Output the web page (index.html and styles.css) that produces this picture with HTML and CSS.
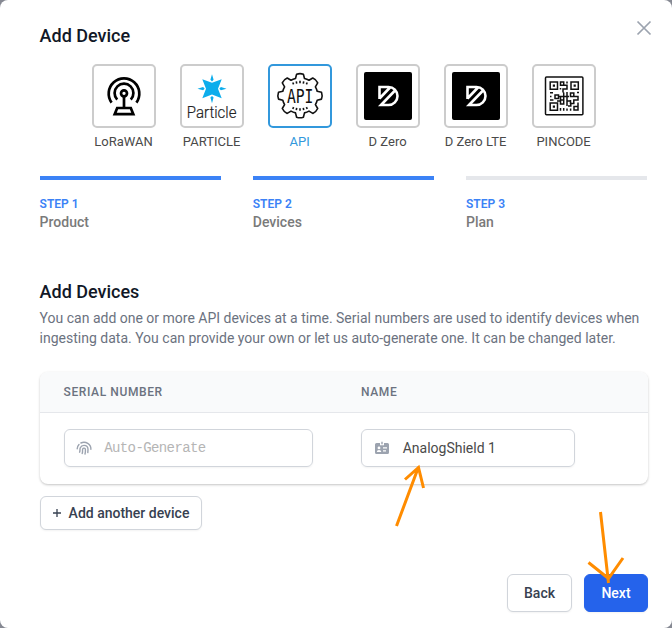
FILE: index.html
```html
<!DOCTYPE html>
<html lang="en">
<head>
<meta charset="utf-8">
<title>Add Device</title>
<link rel="stylesheet" href="styles.css">
</head>
<body>
<main class="modal">
  <svg class="close" viewBox="0 0 16 16"><path d="M1.5 1.5 14.5 14.5M14.5 1.5 1.5 14.5"/></svg>
  <h1>Add Device</h1>

  <div class="types">
    <div class="type">
      <div class="tile">
        <svg viewBox="2 2 60 60" class="line-icon lora">
          <g stroke-width="2.7">
            <circle cx="32" cy="29.3" r="3"/>
            <path d="M25.2 35.6A9.4 9.4 0 1 1 38.8 35.6"/>
            <path d="M19.6 38.6A15.3 15.3 0 1 1 44.4 38.6"/>
            <path d="M32 32.5V43M25.2 44H38.8L41.3 50.2H22.7Z"/>
          </g>
        </svg>
      </div>
      <span>LoRaWAN</span>
    </div>
    <div class="type">
      <div class="tile">
        <svg viewBox="2 2 60 60">
          <g fill="#0cadec">
            <path d="M22.3 15.2 32 18.8 41.7 15.2 38 24.7 41.7 34.2 32 30.6 22.3 34.2 26 24.7Z"/>
            <path d="M32 10.2 33.6 15.8 32 17.4 30.4 15.8ZM32 39.2 33.6 33.6 32 32 30.4 33.6ZM17.5 24.7 23.1 23.1 24.7 24.7 23.1 26.3ZM46.5 24.7 40.9 23.1 39.3 24.7 40.9 26.3Z"/>
          </g>
          <text class="particle" x="6.8" y="53.5" textLength="49.6" lengthAdjust="spacingAndGlyphs">Particle</text>
        </svg>
      </div>
      <span>PARTICLE</span>
    </div>
    <div class="type selected">
      <div class="tile">
        <svg viewBox="2 2 60 60" class="line-icon">
          <g stroke-width="1.6" stroke-linejoin="round">
            <path d="M27.5 14.5 28.6 10.2Q32 9 35.4 10.2L36.5 14.5Q39 15.1 41 16.3L44.8 14Q48.2 15.5 49.7 18.9L47.4 22.8Q48.6 24.8 49.2 27.2L53.5 28.3Q54.7 31.7 53.5 35.1L49.2 36.2Q48.6 38.6 47.4 40.6L49.7 44.5Q48.2 47.9 44.8 49.4L41 47.1Q39 48.3 36.5 48.9L35.4 53.2Q32 54.4 28.6 53.2L27.5 48.9Q25 48.3 23 47.1L19.2 49.4Q15.8 47.9 14.3 44.5L16.6 40.6Q15.4 38.6 14.8 36.2L10.5 35.1Q9.3 31.7 10.5 28.3L14.8 27.2Q15.4 24.8 16.6 22.8L14.3 18.9Q15.8 15.5 19.2 14L23 16.3Q25 15.1 27.5 14.5Z"/>
            <path d="M24.8 18.5 25.6 20.4M28.3 17.3 28.7 19.7M32 16.8V19.3M35.7 17.3 35.3 19.7M39.2 18.5 38.4 20.4M24.8 45 25.6 43.1M28.3 46.2 28.7 43.8M32 46.7V44.2M35.7 46.2 35.3 43.8M39.2 45 38.4 43.1"/>
          </g>
          <text class="api" x="18.9" y="39.2" textLength="26.5" lengthAdjust="spacingAndGlyphs">API</text>
        </svg>
      </div>
      <span>API</span>
    </div>
    <div class="type">
      <div class="tile">
        <svg viewBox="2 2 60 60">
          <rect x="8" y="8" width="48" height="48" rx="2"/>
          <path class="dlogo" d="M23.5 35V23H32.5A9 9 0 0 1 32.5 41H25L39.5 26M23.5 34.5 34 23.5"/>
        </svg>
      </div>
      <span>D Zero</span>
    </div>
    <div class="type">
      <div class="tile">
        <svg viewBox="2 2 60 60">
          <rect x="8" y="8" width="48" height="48" rx="2"/>
          <path class="dlogo" d="M23.5 35V23H32.5A9 9 0 0 1 32.5 41H25L39.5 26M23.5 34.5 34 23.5"/>
        </svg>
      </div>
      <span>D Zero LTE</span>
    </div>
    <div class="type">
      <div class="tile">
        <svg viewBox="2 2 60 60" class="line-icon">
          <g stroke-width="1.5">
            <rect x="13.5" y="13.1" width="37.4" height="37.6" rx="1"/>
            <path d="M18.2 18h7.3v7.3H18.2ZM39 18h7.3v7.3H39ZM18.2 39h7.3v7.3H18.2Z"/>
            <path d="M20.8 21.7h2.2M41.6 21.7h2.2M20.8 42.7h2.2" stroke-width="2.2"/>
            <path d="M28.5 18h3.2v3.2H28.5ZM31.7 21.2H35V25H31v3.5M35 17.5v2M28.5 24v1.5M18 28.7h3M18 36h3.5M18 32.4h1.5M23 31h3.5v3.5H23ZM26.5 32.5H37M28.5 32.5V37H25M31.7 28.5V36H28.5v4h3.2v-4M35 28v9h3.5M38.5 29h3.3v3.5H38.5ZM45 28.5h2M41.8 32.5H46V36H41.8V39.5H38.5V36M35 37v5M36 42h2.8V38.5M42 42.5h4V46H42ZM46 38.5v4M28.5 44v2.8M31.7 44v2.8M35 44.5v2.3M38.6 44.5v2.3"/>
          </g>
        </svg>
      </div>
      <span>PINCODE</span>
    </div>
  </div>

  <ol class="steps">
    <li class="done"><b>STEP 1</b><span>Product</span></li>
    <li class="done"><b>STEP 2</b><span>Devices</span></li>
    <li><b>STEP 3</b><span>Plan</span></li>
  </ol>

  <h2>Add Devices</h2>
  <p class="intro">You can add one or more API devices at a time. Serial numbers are used to identify devices when ingesting data. You can provide your own or let us auto-generate one. It can be changed later.</p>

  <section class="card">
    <div class="row head"><span>SERIAL NUMBER</span><span>NAME</span></div>
    <div class="row">
      <div class="field serial">
        <svg viewBox="0 0 16 16" class="finger"><path d="M1.2 8.8A7 6.6 0 0 1 3 4.6M4.9 3A7 6.6 0 0 1 14.9 9.2M3.6 12.2C4.3 10.6 3.6 9.4 4.3 7.8A4 4 0 0 1 8 5.4C10.6 5.4 12 7.2 12 9.5L11.8 12.6M6.2 13.6C7 11.6 6.2 10.4 6.7 9A1.4 1.4 0 0 1 9.4 9.4C9.5 11 9.4 12.6 9 14"/></svg>
        <span>Auto-Generate</span>
      </div>
      <div class="field name">
        <svg viewBox="0 0 16 16"><path fill="#9ca3af" fill-rule="evenodd" d="M2.5 3H6V5.2H10V3H13.5A1.5 1.5 0 0 1 15 4.5V12.5A1.5 1.5 0 0 1 13.5 14H2.5A1.5 1.5 0 0 1 1 12.5V4.5A1.5 1.5 0 0 1 2.5 3ZM5 6.5A1.4 1.4 0 1 0 5 9.3 1.4 1.4 0 1 0 5 6.5ZM2.8 12H7.3Q7.2 10 5 10T2.8 12ZM9 7.3V8.6H13V7.3ZM9 10.2V11.5H12V10.2ZM7.3 1.8H8.7V4.2H7.3Z"/></svg>
        <span>AnalogShield 1</span>
      </div>
    </div>
  </section>

  <button class="add"><svg viewBox="0 0 10 10"><path d="M5 1V9M1 5H9"/></svg>Add another device</button>

  <footer><button>Back</button><button class="primary">Next</button></footer>

  <svg class="arrows" viewBox="0 0 672 628"><path d="M396.5 526 418.5 467M405 479.5 418.5 467.5 423.5 488M600.5 512 608.5 583M588.5 562.5 608.5 578.5 623 558"/></svg>
</main>
</body>
</html>
```

FILE: styles.css
```css
* { box-sizing: border-box; }
body {
  margin: 0;
  background: #868993;
  font: 14px/20px Roboto, "Liberation Sans", sans-serif;
}
.modal {
  position: relative;
  height: 628px;
  padding: 24px 24px 16px 39.6px;
  border-radius: 8px;
  background: #fff;
}
.close {
  position: absolute;
  top: 20px;
  right: 20px;
  width: 16px;
  height: 16px;
  fill: none;
  stroke: #9ca3af;
  stroke-width: 1.7;
}
h1, h2 {
  margin: 0;
  font-size: 18px;
  line-height: 24px;
  font-weight: 500;
  color: #111827;
}
.types {
  display: flex;
  gap: 24px;
  margin: 16px 0 0 52px;
}
.type {
  display: flex;
  flex-direction: column;
  align-items: center;
  width: 64px;
  font-size: 13px;
  color: #4a4a4a;
  white-space: nowrap;
}
.type > span { margin-top: 4px; }
.tile {
  width: 64px;
  height: 64px;
  border: 2px solid #ccc;
  border-radius: 5px;
}
.tile svg { display: block; }
.selected { color: #3298dc; }
.selected .tile { border-color: #3298dc; }
.line-icon { fill: none; stroke: #111; }
.lora { stroke: #000; }
.dlogo { fill: none; stroke: #fff; stroke-width: 2.6; }
.particle { font: 300 17px Roboto, sans-serif; fill: #222; stroke: #222; stroke-width: .2; }
.api { font: 20px "DejaVu Sans Mono", monospace; fill: #111; stroke: none; }
.steps {
  display: grid;
  grid-template-columns: repeat(3, 1fr);
  gap: 32px;
  width: 607.6px;
  margin: 24px 0 0;
  padding: 0;
  list-style: none;
}
.steps li {
  display: flex;
  flex-direction: column;
  padding-top: 16px;
  border-top: 4px solid #e5e7eb;
}
.steps .done { border-color: #3b82f6; }
.steps b {
  font-size: 12px;
  line-height: 16px;
  font-weight: 600;
  color: #3b82f6;
}
.steps span { font-weight: 500; color: #7a7a7a; }
h2 { margin-top: 48px; }
.intro {
  width: 608px;
  margin: 4px 0 0;
  color: #6b7280;
}
.card {
  width: 608px;
  height: 112px;
  margin-top: 24px;
  border-radius: 8px;
  overflow: hidden;
  box-shadow: 0 1px 3px rgba(0,0,0,.14), 0 1px 2px rgba(0,0,0,.1);
}
.row {
  display: grid;
  grid-template-columns: 297.5px 1fr;
  padding: 16px 24px;
}
.head {
  height: 41px;
  padding: 12px 24px;
  border-bottom: 1px solid #e5e7eb;
  background: #f9fafb;
  font-size: 12px;
  line-height: 16px;
  font-weight: 500;
  letter-spacing: .6px;
  color: #6b7280;
}
.field {
  display: flex;
  align-items: center;
  height: 38px;
  padding: 0 12px 0 11.6px;
  border: 1px solid #d1d5db;
  border-radius: 6px;
  box-shadow: 0 1px 2px rgba(0,0,0,.05);
}
.field svg { width: 16px; height: 16px; }
.finger { fill: none; stroke: #9ca3af; stroke-width: 1.4; stroke-linecap: round; }
.serial { width: 249px; gap: 12px; }
.serial span {
  font-family: "Liberation Mono", monospace;
  letter-spacing: -.6px;
  color: #b5b5b5;
}
.name { width: 214px; gap: 13px; color: #4a4a4a; }
button {
  height: 38px;
  padding: 0 16px;
  border: 1px solid #d1d5db;
  border-radius: 6px;
  background: #fff;
  box-shadow: 0 1px 2px rgba(0,0,0,.05);
  font: 500 14px/20px Roboto, sans-serif;
  color: #374151;
}
.add {
  display: flex;
  align-items: center;
  gap: 7px;
  width: 162px;
  height: 34px;
  margin-top: 12px;
  padding: 0 11px;
  white-space: nowrap;
}
.add svg { flex: none; width: 10px; height: 10px; stroke: #374151; stroke-width: 1.3; }
footer {
  display: flex;
  justify-content: flex-end;
  gap: 12px;
  margin-top: 44px;
}
footer button { width: 65px; }
footer .primary {
  width: 64px;
  border-color: #2563eb;
  background: #2563eb;
  color: #fff;
}
.arrows {
  position: absolute;
  inset: 0;
  width: 672px;
  height: 628px;
  pointer-events: none;
  fill: none;
  stroke: #ff8c00;
  stroke-width: 3;
}
```
